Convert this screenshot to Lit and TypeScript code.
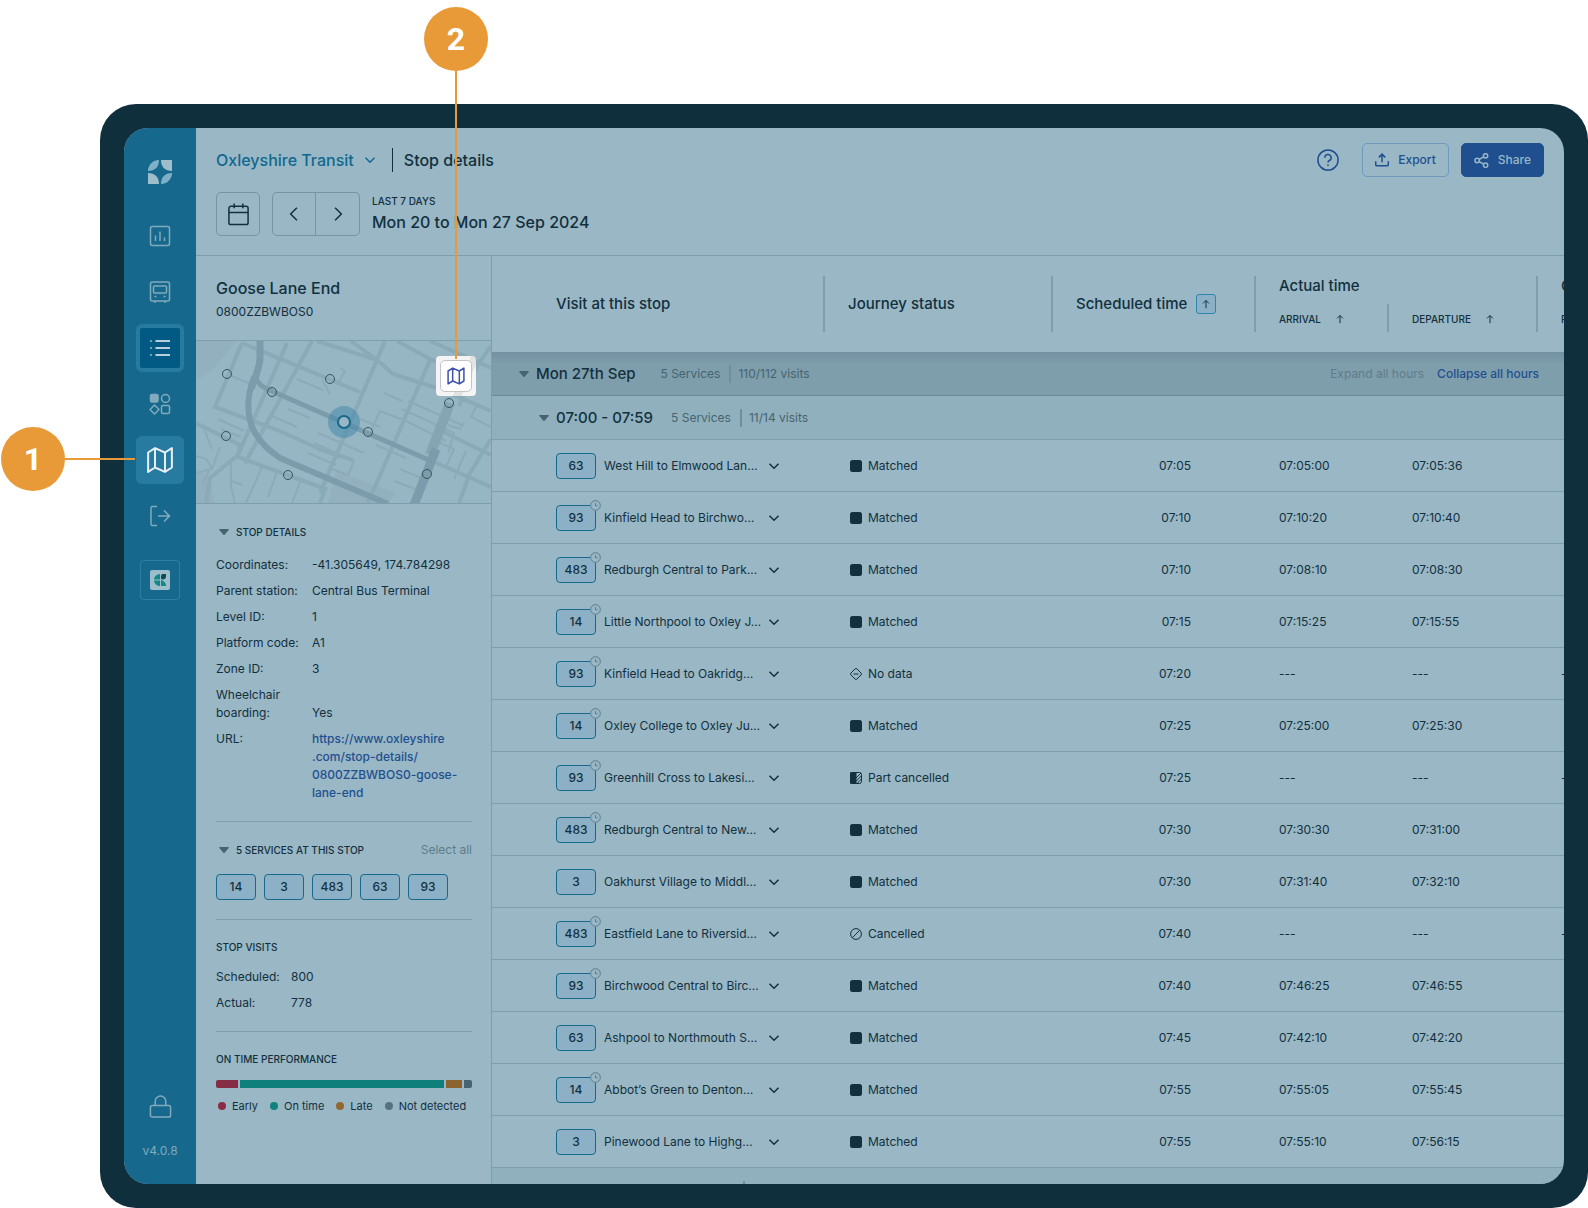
import { LitElement, html, css, svg, nothing } from "lit";
import { customElement, property } from "lit/decorators.js";

type Status = "Matched" | "No data" | "Part cancelled" | "Cancelled";

interface Visit {
  service: string;
  timed: boolean;
  name: string;
  status: Status;
  scheduled: string;
  arrival: string;
  departure: string;
}

const NONE = "---";

const visit = (
  service: string,
  timed: boolean,
  name: string,
  scheduled: string,
  arrival: string,
  departure: string,
  status: Status = "Matched",
): Visit => ({ service, timed, name, status, scheduled, arrival, departure });

const VISITS: Visit[] = [
  visit("63", false, "West Hill to Elmwood Lan…", "07:05", "07:05:00", "07:05:36"),
  visit("93", true, "Kinfield Head to Birchwo…", "07:10", "07:10:20", "07:10:40"),
  visit("483", true, "Redburgh Central to Park…", "07:10", "07:08:10", "07:08:30"),
  visit("14", true, "Little Northpool to Oxley J…", "07:15", "07:15:25", "07:15:55"),
  visit("93", true, "Kinfield Head to Oakridg…", "07:20", NONE, NONE, "No data"),
  visit("14", true, "Oxley College to Oxley Ju…", "07:25", "07:25:00", "07:25:30"),
  visit("93", true, "Greenhill Cross to Lakesi…", "07:25", NONE, NONE, "Part cancelled"),
  visit("483", true, "Redburgh Central to New…", "07:30", "07:30:30", "07:31:00"),
  visit("3", false, "Oakhurst Village to Middl…", "07:30", "07:31:40", "07:32:10"),
  visit("483", true, "Eastfield Lane to Riversid…", "07:40", NONE, NONE, "Cancelled"),
  visit("93", true, "Birchwood Central to Birc…", "07:40", "07:46:25", "07:46:55"),
  visit("63", false, "Ashpool to Northmouth S…", "07:45", "07:42:10", "07:42:20"),
  visit("14", true, "Abbot’s Green to Denton…", "07:55", "07:55:05", "07:55:45"),
  visit("3", false, "Pinewood Lane to Highg…", "07:55", "07:55:10", "07:56:15"),
];

const PERFORMANCE = [
  { label: "Early", share: 22, color: "#862c44", dot: "#8a2c45" },
  { label: "On time", share: 204, color: "#0f7f7c", dot: "#10827e" },
  { label: "Late", share: 16, color: "#8c632e", dot: "#926730" },
  { label: "Not detected", share: 8, color: "#456470", dot: "#54737f" },
];

/* Line icons: drawn on a 24 unit grid, coloured by the text colour. */
const ICONS = {
  chart: svg`<rect x="2.500" y="2.500" width="19" height="19" rx="2"/><path d="M7.500 11.500V17M12 7.500V17M16.500 13.500V17"/>`,
  bus: svg`<rect x="2.500" y="2" width="19" height="19" rx="2"/><rect x="5.500" y="6" width="13" height="7" rx="1"/><path d="M6.500 16.500h2M15.500 16.500h2M7 21v2M17 21v2"/>`,
  list: svg`<path d="M7.500 5H22M7.500 12H22M7.500 19H22"/><path d="M2 5h2M2 12h2M2 19h2" opacity="0.600"/>`,
  shapes: svg`<rect x="2.500" y="2.500" width="7.500" height="7.500" rx="1.500" fill="currentColor"/><circle cx="17.500" cy="6.500" r="4"/><path d="M6.500 13l4.500 4.500-4.500 4.500-4.500-4.500z" stroke-linejoin="round"/><rect x="13.500" y="13.500" width="8" height="8" rx="1.500"/>`,
  map: svg`<path d="M2.500 6l5.500-3.500 8 3.500 5.500-3.500V18L16 21.500 8 18l-5.500 3.500zM8 2.500V18M16 6v15.500" stroke-linejoin="round"/>`,
  exit: svg`<path d="M9 2.500H4.500a1.500 1.500 0 0 0-1.500 1.500v16a1.500 1.500 0 0 0 1.500 1.500H9M10 12h11.500M16 6.500l5.500 5.500-5.500 5.500"/>`,
  lock: svg`<rect x="1.500" y="11" width="21" height="12" rx="2"/><path d="M6.500 11V6.500a5.500 5.500 0 0 1 11 0V11"/>`,
  calendar: svg`<rect x="2" y="3.500" width="20" height="19" rx="2"/><path d="M2 10h20M7.500 0.500v5M16.500 0.500v5"/>`,
  left: svg`<path d="M15.500 4.500L8 12l7.500 7.500"/>`,
  right: svg`<path d="M8.500 4.500L16 12l-7.500 7.500"/>`,
  down: svg`<path d="M3 7.500l9 9 9-9"/>`,
  up: svg`<path d="M12 22V4M5 10.500l7-7 7 7"/>`,
  help: svg`<circle cx="12" cy="12" r="11"/><path d="M8.500 9.500a3.500 3.500 0 1 1 5 3.100c-1 .5-1.500 1-1.500 2.100M12 17v1.500"/>`,
  upload: svg`<path d="M1.200 14v6a2 2 0 0 0 2 2h17.600a2 2 0 0 0 2-2v-6M12 16V2M6.500 7.500L12 2l5.500 5.500"/>`,
  share: svg`<circle cx="5" cy="12" r="3.500"/><circle cx="18.500" cy="4.500" r="3.500"/><circle cx="18.500" cy="19.500" r="3.500"/><path d="M8 10.400l7.500-4.200M8 13.600l7.500 4.200"/>`,
  clock: svg`<circle cx="12" cy="12" r="10.500"/><path d="M12 6.500V12.500h4.500"/>`,
  "No data": svg`<path d="M10.300 1.700a2.400 2.400 0 0 1 3.400 0l8.600 8.600a2.400 2.400 0 0 1 0 3.400l-8.600 8.600a2.400 2.400 0 0 1-3.400 0L1.700 13.700a2.400 2.400 0 0 1 0-3.400zM7 12h10"/>`,
  Cancelled: svg`<circle cx="12" cy="12" r="10.800"/><path d="M4.500 19.500l15-15"/>`,
  Matched: svg`<rect width="24" height="24" rx="5" fill="currentColor"/>`,
  "Part cancelled": svg`<path d="M12 0H5a5 5 0 0 0-5 5v14a5 5 0 0 0 5 5h7z" fill="currentColor"/><path d="M12 1h7a4 4 0 0 1 4 4v14a4 4 0 0 1-4 4h-7M12 12L22 2M12 18.500L23 7.500M14 23l9-9" stroke-width="2"/>`,
};

type IconName = keyof typeof ICONS;

const icon = (name: IconName, size: number, weight = 1.5) => html`
  <svg
    width=${size}
    height=${size}
    viewBox="0 0 24 24"
    fill="none"
    stroke="currentColor"
    stroke-width=${(weight * 24) / size}
    aria-hidden="true"
  >${ICONS[name]}</svg>`;

const triangle = html`<svg class="triangle" width="10" height="6" viewBox="0 0 10 6" aria-hidden="true">
  <path d="M0.800 0h8.400a0.600 0.600 0 0 1 .5 1L5.600 5.700a.8.8 0 0 1-1.200 0L.3 1a.6.6 0 0 1 .5-1z" fill="#45646f"/>
</svg>`;

const base = css`
  :host {
    box-sizing: border-box;
    color: #12303e;
    font: 400 12px/18px Inter, "Open Sans", sans-serif;
  }
  *,
  *::before {
    box-sizing: border-box;
  }
  svg {
    display: block;
    flex: none;
  }
  button {
    font: inherit;
    color: inherit;
    background: none;
    border: 0;
    padding: 0;
    margin: 0;
    cursor: pointer;
  }
  a {
    color: inherit;
    text-decoration: none;
  }
  h1,
  h2,
  h3,
  dl,
  dd,
  p {
    margin: 0;
    font-size: inherit;
    font-weight: inherit;
  }
`;

@customElement("service-chip")
export class ServiceChip extends LitElement {
  @property() label = "";
  @property({ type: Boolean }) timed = false;

  static styles = [
    base,
    css`
      :host {
        position: relative;
        display: flex;
        align-items: center;
        justify-content: center;
        flex: none;
        width: 40px;
        height: 26px;
        border: 1px solid #16698d;
        border-radius: 4px;
        background: #8cb1c6;
        font-weight: 500;
      }
      .clock {
        position: absolute;
        top: -6px;
        right: -6px;
        border-radius: 50%;
        background: #99b7c5;
        color: #5c7d8b;
      }
    `,
  ];

  render() {
    return html`${this.label}${this.timed ? html`<span class="clock">${icon("clock", 11, 1)}</span>` : nothing}`;
  }
}

@customElement("nav-rail")
export class NavRail extends LitElement {
  static styles = [
    base,
    css`
      :host {
        display: flex;
        flex-direction: column;
        align-items: center;
        flex: none;
        width: 72px;
        padding: 32px 0 24px;
        background: #16698d;
        color: #82aabd;
      }
      .links {
        display: flex;
        flex-direction: column;
        gap: 8px;
        margin: 28px 0 20px;
      }
      .link {
        display: grid;
        place-items: center;
        width: 48px;
        height: 48px;
        border-radius: 6px;
      }
      .current {
        border: 4px solid #277ba0;
        background: #005a84;
        color: #b9d0da;
      }
      .focus {
        background: #277ba0;
        color: #e6eff3;
      }
      .operator {
        display: grid;
        place-items: center;
        width: 40px;
        height: 40px;
        border: 1px solid #2f7fa4;
        border-radius: 4px;
      }
      .foot {
        display: flex;
        flex-direction: column;
        align-items: center;
        gap: 24px;
        margin-top: auto;
      }
    `,
  ];

  render() {
    return html`
      <svg width="24" height="24" viewBox="0 0 24 24" role="img" aria-label="Home">
        <path d="M11 0A11 11 0 0 0 0 11C7 11 11 7 11 0z" fill="#7fb0ca"/>
        <path d="M24 0H13c0 7 4 11 11 11z" fill="#9dbdcb"/>
        <path d="M0 13v11h11c0-7-4-11-11-11z" fill="#9dbdcb"/>
        <path d="M24 13A11 11 0 0 1 13 24c0-7 4-11 11-11z" fill="#7fb0ca"/>
      </svg>
      <nav class="links" aria-label="Main">
        <a class="link" href="#reports" aria-label="Reports">${icon("chart", 24)}</a>
        <a class="link" href="#vehicles" aria-label="Vehicles">${icon("bus", 24)}</a>
        <a class="link current" href="#stops" aria-label="Stops">${icon("list", 24, 2)}</a>
        <a class="link" href="#patterns" aria-label="Patterns">${icon("shapes", 24)}</a>
        <a class="link focus" href="#map" aria-label="Map">${icon("map", 30, 2)}</a>
        <a class="link" href="#exit" aria-label="Sign out">${icon("exit", 24)}</a>
      </nav>
      <a class="operator" href="#operator" aria-label="Operator">
        <svg width="20" height="20" viewBox="0 0 20 20" aria-hidden="true">
          <rect width="20" height="20" rx="2" fill="#9dbdcb"/>
          <path d="M10 4a6 6 0 0 0-6 5.500h6zM4 10.500A6 6 0 0 0 10 16v-5.500z" fill="#108a86"/>
          <path d="M11 10c0 0 5 1 5 6h-5z" fill="#108a86"/>
          <path d="M16 4v2.500a3 3 0 0 1-5 2.200V6a2 2 0 0 1 2-2z" fill="#0b4c52"/>
        </svg>
      </a>
      <div class="foot">
        <button aria-label="Lock">${icon("lock", 23)}</button>
        <span>v4.0.8</span>
      </div>
    `;
  }
}

@customElement("top-bar")
export class TopBar extends LitElement {
  static styles = [
    base,
    css`
      :host {
        display: flex;
        flex-direction: column;
        gap: 15px;
        height: 128px;
        padding: 15px 20px 18px;
        border-bottom: 1px solid #7f9eac;
      }
      .row {
        display: flex;
        align-items: center;
      }
      .operator {
        display: flex;
        align-items: center;
        gap: 10px;
        color: #10688f;
        font: 500 16px/24px Inter, "Open Sans", sans-serif;
      }
      .title {
        margin-left: 16px;
        padding-left: 11px;
        border-left: 1px solid #12303e;
        font: 500 16px/24px Inter, "Open Sans", sans-serif;
      }
      .actions {
        display: flex;
        align-items: center;
        gap: 12px;
        margin-left: auto;
      }
      .help {
        margin-right: 11px;
        color: #1f4f8f;
      }
      .action {
        display: flex;
        align-items: center;
        gap: 9px;
        height: 34px;
        padding: 0 12px;
        border: 1px solid #6f9abd;
        border-radius: 5px;
        color: #1f4f8f;
        font-weight: 500;
      }
      .primary {
        border-color: #1f4f8f;
        background: #1f4f8f;
        color: #99b7c5;
      }
      .square {
        display: grid;
        place-items: center;
        width: 44px;
        height: 44px;
        border: 1px solid #7595a3;
        border-radius: 5px;
      }
      .pager {
        display: flex;
        margin: 0 12px;
      }
      .prev {
        border-radius: 5px 0 0 5px;
      }
      .next {
        border-left: 0;
        border-radius: 0 5px 5px 0;
      }
      .range {
        display: flex;
        flex-direction: column;
      }
      .eyebrow {
        font: 500 10px/16px Inter, "Open Sans", sans-serif;
        text-transform: uppercase;
      }
      .dates {
        font: 500 16px/26px Inter, "Open Sans", sans-serif;
      }
    `,
  ];

  render() {
    return html`
      <div class="row">
        <button class="operator">Oxleyshire Transit ${icon("down", 12)}</button>
        <h1 class="title">Stop details</h1>
        <div class="actions">
          <button class="help" aria-label="Help">${icon("help", 22)}</button>
          <button class="action">${icon("upload", 14)}Export</button>
          <button class="action primary">${icon("share", 15)}Share</button>
        </div>
      </div>
      <div class="row">
        <button class="square" aria-label="Choose dates">${icon("calendar", 23)}</button>
        <div class="pager">
          <button class="square prev" aria-label="Previous period">${icon("left", 20)}</button>
          <button class="square next" aria-label="Next period">${icon("right", 20)}</button>
        </div>
        <div class="range">
          <span class="eyebrow">Last 7 days</span>
          <span class="dates">Mon 20 to Mon 27 Sep 2024</span>
        </div>
      </div>
    `;
  }
}

const STOPS = [
  [31, 33], [76, 51], [134, 38], [30, 95], [172, 91], [253, 62], [231, 133], [92, 134],
];

@customElement("stop-map")
export class StopMap extends LitElement {
  static styles = [
    base,
    css`
      :host {
        position: relative;
        display: block;
        border: solid #7f9eac;
        border-width: 1px 0;
      }
      .canvas {
        width: 100%;
        height: 162px;
      }
      .spot {
        position: absolute;
        top: 15px;
        right: 15px;
        padding: 4px;
        border-radius: 4px;
        background: linear-gradient(115deg, #f4f4f4 60%, #e2e2e2 60%, #e2e2e2 75%, #f4f4f4 75%);
      }
      .open {
        display: grid;
        place-items: center;
        width: 32px;
        height: 32px;
        border: 1px solid #c4c4c4;
        border-radius: 5px;
        background: #fff;
        color: #3b52a8;
      }
    `,
  ];

  render() {
    return html`
      <svg class="canvas" viewBox="0 0 295 162" preserveAspectRatio="xMidYMid slice" fill="none" role="img" aria-label="Map of stops around Goose Lane End">
        <rect width="295" height="162" fill="#97b6c4"/>
        <path d="M0 0h40L18 28 0 40zM0 128l14 8 4 26H0zM140 130l60 22-8 10h-60z" fill="#92b0be"/>
        <g stroke="#8baab8" stroke-width="4">
          <path d="M46 2l118 49M46 2L19 66l60 22 49 22 29 9M91 2L42 114M116 0L60 102l-11 20"/>
          <path d="M121 0l60 19 16 14 44 14 54 23M155 0l26 19M189 0l-65 152M234 19l-62 143M201 0l33 18 20 8M234 0l61 27"/>
          <path d="M0 82l44 22-2 12 85 31M42 114L14 137l-4 25M130 146l-6 16"/>
          <path d="M241 88l54 26M234 119l61 27M295 98l-21 34-11 30M295 5l-14 20-18 40"/>
        </g>
        <g stroke="#8cabb9" stroke-width="2">
          <path d="M31 33l28 12M144 27l5 3-8 14M188 52l18 8M101 38l26 11M126 39l8 14M92 68l22 9M76 75l25 11M70 84l-7 12"/>
          <path d="M0 115l10 3 5 8-8 16M35 122v24l4 16M35 140l12 4M0 132l16-4 8-22M22 78l26 12M25 88l20 8M8 88l8 20"/>
          <path d="M176 88l8-18 26 10M206 68l52 24-6 20M212 60l54 24M210 80l40 20M180 104l30 13M118 102l40 18-6 14-20-8M112 112l28 12M122 92l46 20M164 78l20 8"/>
          <path d="M204 128l28 12M198 140l24 9M240 100l18 8-8 18M252 84l12 4 4-6M280 66l-5 10 20 10M270 110l-12 28M82 128l-10 28M66 126l-16 36M106 136l-10 26"/>
        </g>
        <path d="M254 62l-20 52" stroke="#86a5b3" stroke-width="10"/>
        <path d="M240 108l-22 56" stroke="#7d9cab" stroke-width="9"/>
        <g stroke="#7d9cab">
          <path d="M64 0v18C63 30 58 38 55 48" stroke-width="7"/>
          <path d="M58 36C50 58 51 76 58 90c7 13 16 20 26 27l108 46" stroke-width="6"/>
          <path d="M59 34c2 8 6 11 12 14l164 72" stroke-width="5"/>
        </g>
        <circle cx="148" cy="81" r="16" fill="#3d86a8" fill-opacity="0.500"/>
        <circle cx="148" cy="81" r="6" fill="#99b7c5" stroke="#16698d" stroke-width="2"/>
        ${STOPS.map(([x, y]) => svg`<circle cx=${x} cy=${y} r="4.500" stroke="#35535f" stroke-width="1"/>`)}
      </svg>
      <span class="spot"><button class="open" aria-label="Open map">${icon("map", 20)}</button></span>
    `;
  }
}

@customElement("stop-panel")
export class StopPanel extends LitElement {
  static styles = [
    base,
    css`
      :host {
        display: flex;
        flex-direction: column;
        flex: none;
        width: 296px;
        border-right: 1px solid #7f9eac;
      }
      .stop {
        display: flex;
        flex-direction: column;
        gap: 3px;
        padding: 20px 20px 19px;
      }
      .name {
        font: 500 16px/24px Inter, "Open Sans", sans-serif;
      }
      .sections {
        display: flex;
        flex-direction: column;
        padding: 0 19px 0 20px;
      }
      .section {
        display: flex;
        flex-direction: column;
        padding: 18px 0 19px;
        border-bottom: 1px solid #7f9eac;
      }
      .section:last-child {
        border-bottom: 0;
      }
      .bar {
        display: flex;
        align-items: center;
        justify-content: space-between;
        height: 20px;
        margin-bottom: 14px;
      }
      .plain {
        height: 18px;
        margin-bottom: 12px;
      }
      .heading {
        display: flex;
        align-items: center;
        gap: 7px;
        font: 500 10px/18px Inter, "Open Sans", sans-serif;
        text-transform: uppercase;
      }
      .triangle {
        margin-left: 3px;
      }
      .all {
        color: #5c7d8b;
      }
      .facts {
        display: grid;
        grid-template-columns: 88px 1fr;
        gap: 8px;
        align-items: end;
      }
      .visits {
        grid-template-columns: 67px 1fr;
      }
      .top {
        align-self: start;
      }
      .url {
        color: #1f4f8f;
        font-weight: 500;
      }
      .chips {
        display: flex;
        gap: 8px;
      }
      .meter {
        display: flex;
        gap: 2px;
        height: 8px;
        border-radius: 2px;
        overflow: hidden;
      }
      .legend {
        display: flex;
        gap: 12px;
        margin-top: 9px;
        padding-left: 2px;
        font-size: 11px;
      }
      .key {
        display: flex;
        align-items: center;
        gap: 6px;
        white-space: nowrap;
      }
      .dot {
        width: 8px;
        height: 8px;
        border-radius: 50%;
      }
    `,
  ];

  render() {
    return html`
      <div class="stop">
        <h2 class="name">Goose Lane End</h2>
        <p>0800ZZBWBOS0</p>
      </div>
      <stop-map></stop-map>
      <div class="sections">
        <section class="section">
          <div class="bar"><button class="heading">${triangle}Stop details</button></div>
          <dl class="facts">
            <dt>Coordinates:</dt><dd>-41.305649, 174.784298</dd>
            <dt>Parent station:</dt><dd>Central Bus Terminal</dd>
            <dt>Level ID:</dt><dd>1</dd>
            <dt>Platform code:</dt><dd>A1</dd>
            <dt>Zone ID:</dt><dd>3</dd>
            <dt>Wheelchair boarding:</dt><dd>Yes</dd>
            <dt class="top">URL:</dt>
            <dd><a class="url" href="https://www.oxleyshire.com/stop-details/0800ZZBWBOS0-goose-lane-end">https://www.oxleyshire<wbr>.com/stop-details/<wbr>0800ZZBWBOS0-goose-<wbr>lane-end</a></dd>
          </dl>
        </section>
        <section class="section">
          <div class="bar">
            <button class="heading">${triangle}5 services at this stop</button>
            <button class="all">Select all</button>
          </div>
          <div class="chips">
            ${["14", "3", "483", "63", "93"].map((s) => html`<service-chip label=${s}></service-chip>`)}
          </div>
        </section>
        <section class="section">
          <div class="bar plain"><h3 class="heading">Stop visits</h3></div>
          <dl class="facts visits">
            <dt>Scheduled:</dt><dd>800</dd>
            <dt>Actual:</dt><dd>778</dd>
          </dl>
        </section>
        <section class="section">
          <div class="bar plain"><h3 class="heading">On time performance</h3></div>
          <div class="meter">
            ${PERFORMANCE.map((p) => html`<span style="flex: ${p.share} 0 0; background: ${p.color}"></span>`)}
          </div>
          <div class="legend">
            ${PERFORMANCE.map((p) => html`<span class="key"><span class="dot" style="background: ${p.dot}"></span>${p.label}</span>`)}
          </div>
        </section>
      </div>
    `;
  }
}

@customElement("visit-table")
export class VisitTable extends LitElement {
  static styles = [
    base,
    css`
      :host {
        display: block;
        flex: 1;
        min-width: 0;
        overflow: hidden;
      }
      .table {
        width: 100%;
        table-layout: fixed;
        border-collapse: separate;
        border-spacing: 0;
      }
      .c-visit { width: 331px; }
      .c-status { width: 228px; }
      .c-scheduled { width: 203px; }
      .c-arrival { width: 133px; }
      .c-departure { width: 149px; }
      th {
        padding: 0;
        text-align: left;
        white-space: nowrap;
        font: 500 15px/20px Inter, "Open Sans", sans-serif;
      }
      .cell {
        display: flex;
        align-items: center;
        gap: 9px;
        height: 56px;
        margin: 20px 0;
        padding-left: 23px;
        border-left: 2px solid #7f9eac;
      }
      .first {
        padding-left: 64px;
        border-left: 0;
      }
      .upper {
        align-items: start;
        height: 28px;
        margin-bottom: 0;
      }
      .lower {
        gap: 14px;
        height: 28px;
        padding-top: 2px;
        margin-top: 0;
        font: 500 10px/16px Inter, "Open Sans", sans-serif;
        text-transform: uppercase;
      }
      .sort {
        display: grid;
        place-items: center;
      }
      .sorted {
        width: 20px;
        height: 20px;
        border: 1px solid #2f86ac;
        border-radius: 3px;
        background: #8cb1c6;
      }
      .group {
        height: 44px;
        padding: 0;
        border-bottom: 1px solid #7f9eac;
        background: #91b0be;
        white-space: nowrap;
      }
      .day {
        border-bottom-color: #6a8a98;
        background: linear-gradient(#7391a0, #7f9eac 12px);
      }
      .line {
        display: flex;
        align-items: center;
        padding: 0 25px 0 47px;
        color: #456470;
      }
      .day .line {
        padding-left: 27px;
      }
      .toggle {
        display: flex;
        align-items: center;
        gap: 7px;
        margin-right: 18px;
        color: #12303e;
        font: 500 15px/20px Inter, "Open Sans", sans-serif;
      }
      .day .toggle {
        margin-right: 25px;
      }
      .count {
        margin-left: 9px;
        padding-left: 7px;
        border-left: 2px solid #6f8f9d;
      }
      .expand {
        margin-left: auto;
        color: #5c7d8b;
      }
      .collapse {
        margin-left: 13px;
        color: #1f4f8f;
        font-weight: 500;
      }
      .row td {
        height: 52px;
        padding: 0 0 0 25px;
        border-bottom: 1px solid #7f9eac;
        overflow: hidden;
        white-space: nowrap;
      }
      .row .visit {
        padding-left: 64px;
      }
      .row .scheduled {
        padding: 0 63px 0 0;
        text-align: right;
      }
      .journey {
        display: flex;
        align-items: center;
        gap: 8px;
      }
      .label {
        width: 156px;
      }
      .status {
        display: flex;
        align-items: center;
        gap: 6px;
        padding-left: 2px;
      }
    `,
  ];

  private row(v: Visit) {
    return html`<tr class="row">
      <td class="visit">
        <div class="journey">
          <service-chip label=${v.service} ?timed=${v.timed}></service-chip>
          <span class="label">${v.name}</span>
          <button aria-label="Show visit">${icon("down", 12)}</button>
        </div>
      </td>
      <td><span class="status">${icon(v.status, 12, v.status === "Matched" ? 0 : 1)}${v.status}</span></td>
      <td class="scheduled">${v.scheduled}</td>
      <td>${v.arrival}</td>
      <td>${v.departure}</td>
      <td>${v.arrival === NONE ? NONE : ""}</td>
    </tr>`;
  }

  render() {
    return html`
      <table class="table">
        <colgroup>
          <col class="c-visit" /><col class="c-status" /><col class="c-scheduled" />
          <col class="c-arrival" /><col class="c-departure" /><col />
        </colgroup>
        <thead>
          <tr>
            <th rowspan="2"><div class="cell first">Visit at this stop</div></th>
            <th rowspan="2"><div class="cell">Journey status</div></th>
            <th rowspan="2">
              <div class="cell">Scheduled time
                <button class="sort sorted" aria-label="Sort by scheduled time">${icon("up", 10, 1)}</button>
              </div>
            </th>
            <th colspan="2"><div class="cell upper">Actual time</div></th>
            <th><div class="cell upper">C</div></th>
          </tr>
          <tr>
            <th>
              <div class="cell lower">Arrival
                <button class="sort" aria-label="Sort by arrival">${icon("up", 10, 1)}</button>
              </div>
            </th>
            <th>
              <div class="cell lower">Departure
                <button class="sort" aria-label="Sort by departure">${icon("up", 10, 1)}</button>
              </div>
            </th>
            <th><div class="cell lower">F</div></th>
          </tr>
        </thead>
        <tbody>
          <tr>
            <td class="group day" colspan="6">
              <div class="line">
                <button class="toggle">${triangle}Mon 27th Sep</button>
                <span>5 Services</span><span class="count">110/112 visits</span>
                <button class="expand">Expand all hours</button>
                <button class="collapse">Collapse all hours</button>
              </div>
            </td>
          </tr>
          <tr>
            <td class="group" colspan="6">
              <div class="line">
                <button class="toggle">${triangle}07:00 - 07:59</button>
                <span>5 Services</span><span class="count">11/14 visits</span>
              </div>
            </td>
          </tr>
          ${VISITS.map((v) => this.row(v))}
          <tr>
            <td class="group" colspan="6">
              <div class="line">
                <button class="toggle">${triangle}08:00 - 08:59</button>
                <span>5 Services</span><span class="count">11/14 visits</span>
              </div>
            </td>
          </tr>
        </tbody>
      </table>
    `;
  }
}

@customElement("app-root")
export class AppRoot extends LitElement {
  static styles = [
    base,
    css`
      :host {
        position: relative;
        display: flex;
        height: 100vh;
        padding: 104px 0 0 100px;
        overflow: hidden;
        background: #fff;
      }
      .device {
        display: flex;
        flex: 1;
        min-width: 0;
        padding: 24px;
        border-radius: 36px;
        background: #102f3c;
      }
      .screen {
        display: flex;
        flex: 1;
        min-width: 0;
        border-radius: 24px;
        overflow: hidden;
        background: #99b7c5;
      }
      .main {
        display: flex;
        flex-direction: column;
        flex: 1;
        min-width: 0;
      }
      .content {
        display: flex;
        flex: 1;
        min-height: 0;
      }
      .callout {
        position: absolute;
        display: flex;
        align-items: center;
      }
      .callout::after {
        content: "";
        background: #e89a38;
      }
      .one {
        top: 427px;
        left: 1px;
      }
      .one::after {
        width: 70px;
        height: 2px;
      }
      .two {
        top: 7px;
        left: 424px;
        flex-direction: column;
      }
      .two::after {
        width: 2px;
        height: 288px;
      }
      .number {
        display: grid;
        place-items: center;
        width: 64px;
        height: 64px;
        border-radius: 50%;
        background: #e89a38;
        color: #fff;
        font: 700 32px/40px Roboto, sans-serif;
      }
    `,
  ];

  render() {
    return html`
      <div class="device">
        <div class="screen">
          <nav-rail></nav-rail>
          <main class="main">
            <top-bar></top-bar>
            <div class="content">
              <stop-panel></stop-panel>
              <visit-table></visit-table>
            </div>
          </main>
        </div>
      </div>
      <div class="callout one"><span class="number">1</span></div>
      <div class="callout two"><span class="number">2</span></div>
    `;
  }
}
